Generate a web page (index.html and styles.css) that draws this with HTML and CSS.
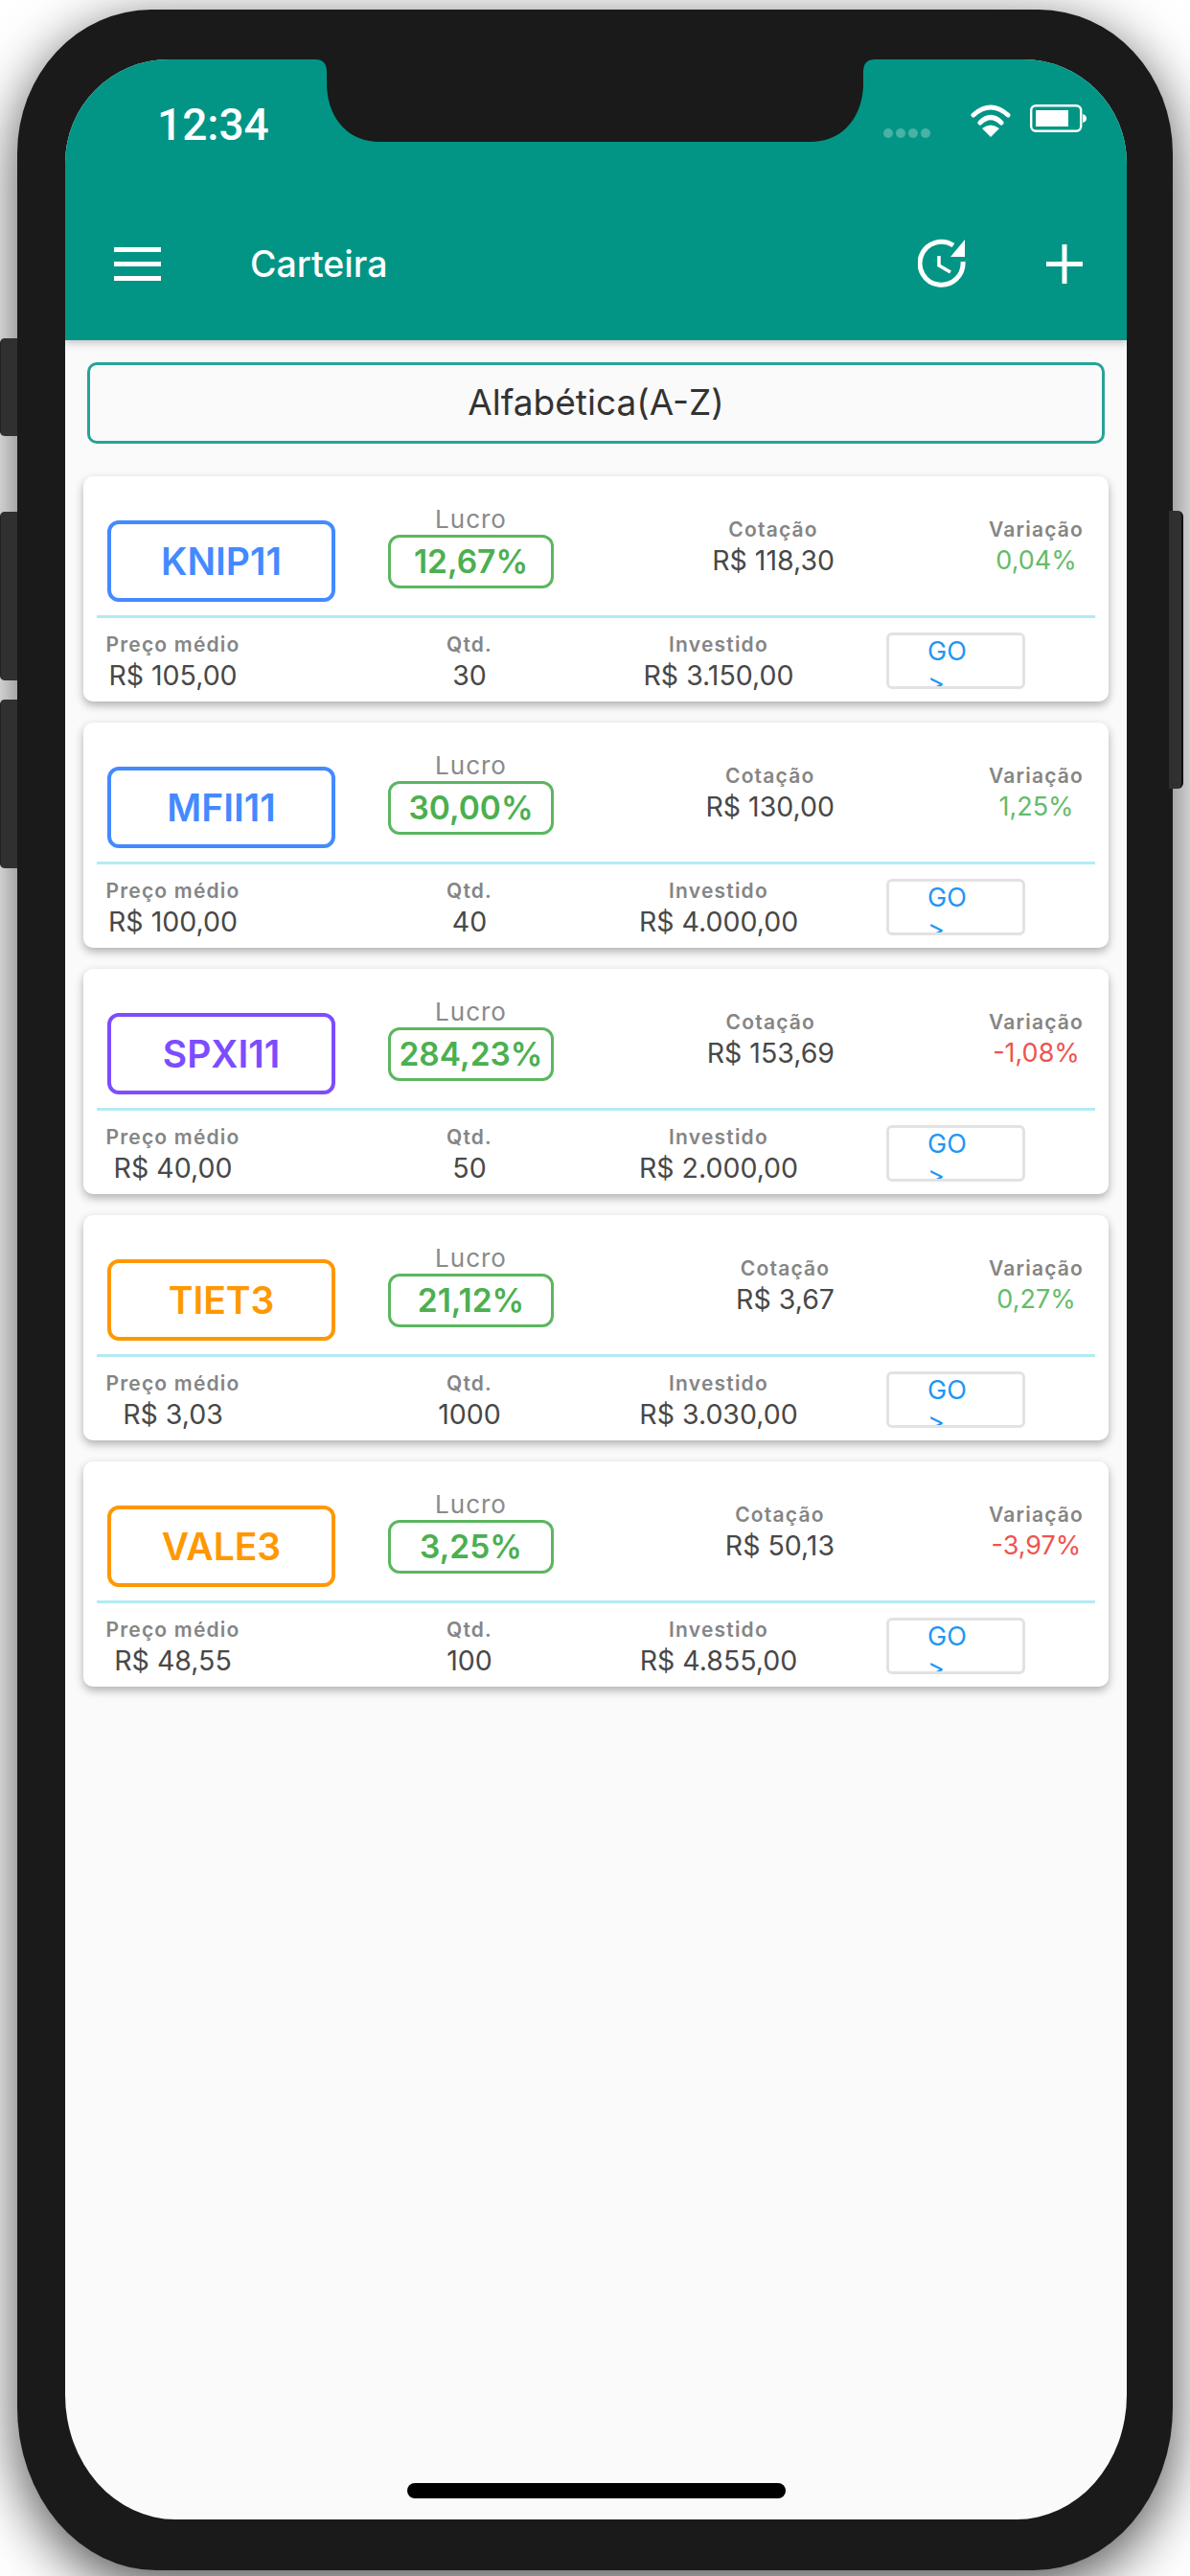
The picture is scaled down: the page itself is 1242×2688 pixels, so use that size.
FILE: index.html
```html
<!DOCTYPE html>
<html>
<head lang="pt">
    <meta charset="UTF-8">
    <title>Carteira</title>
    <link rel="stylesheet" href="styles.css">
</head>
<body>
<div class="phone">
    <span class="side-btn btn-mute"></span>
    <span class="side-btn btn-up"></span>
    <span class="side-btn btn-down"></span>
    <span class="side-btn btn-power"></span>

    <div class="screen">
        <svg class="notch" width="584" height="86" viewBox="0 0 584 86">
            <path d="M0 0Q12 0 12 13V28C14 66 38 86 67 86H517C546 86 570 66 572 28V13Q572 0 584 0Z" fill="#1a1a1a"/>
        </svg>

        <header class="header">
            <div class="status">
                <span class="time">12:34</span>
                <span class="dots"><i></i><i></i><i></i><i></i></span>
                <svg class="wifi" width="42" height="35" viewBox="0 0 42 35">
                    <path d="M3 12Q21 -4 39 12M10 20Q21 9 32 20" fill="none" stroke="#fff" stroke-width="5" stroke-linecap="round"/>
                    <path d="M21 35L12 26Q21 19 30 26Z" fill="#fff"/>
                </svg>
                <svg class="battery" width="59" height="29" viewBox="0 0 59 29">
                    <rect x="1.2" y="1.2" width="52" height="26.6" rx="5" fill="none" stroke="#fff" stroke-width="2.4"/>
                    <rect x="6" y="6" width="34" height="17" fill="#fff"/>
                    <path d="M55 10q4 1 4 4.500t-4 4.500z" fill="#fff"/>
                </svg>
            </div>
            <div class="toolbar">
                <span class="menu"><i></i><i></i><i></i></span>
                <span class="title">Carteira</span>
                <svg class="history" width="50" height="52" viewBox="0 0 50 52">
                    <path d="M37 7A22.500 22.500 0 1 0 47 24" fill="none" stroke="#fff" stroke-width="5"/>
                    <path d="M49 1V19H34Z" fill="#fff"/>
                    <path d="M22 18V28L34 35" fill="none" stroke="#fff" stroke-width="3.500"/>
                </svg>
                <svg class="plus" width="38" height="41" viewBox="0 0 38 41">
                    <path d="M19 0V41M0 20.500H38" stroke="#fff" stroke-width="5"/>
                </svg>
            </div>
        </header>

        <div class="sort">Alfabética(A-Z)</div>

        <div class="list">
            <div class="card">
                <div class="card-top">
                    <div class="ticker blue">KNIP11</div>
                    <div class="lucro"><span class="lucro-label">Lucro</span><span class="lucro-value">12,67%</span></div>
                    <div class="col cotacao"><span class="label">Cotação</span><span class="value">R$ 118,30</span></div>
                    <div class="col variacao"><span class="label">Variação</span><span class="value up">0,04%</span></div>
                </div>
                <div class="divider"></div>
                <div class="card-bottom">
                    <div class="col preco"><span class="label">Preço médio</span><span class="value">R$ 105,00</span></div>
                    <div class="col qtd"><span class="label">Qtd.</span><span class="value">30</span></div>
                    <div class="col investido"><span class="label">Investido</span><span class="value">R$ 3.150,00</span></div>
                    <div class="go">GO &gt;</div>
                </div>
            </div>

            <div class="card">
                <div class="card-top">
                    <div class="ticker blue">MFII11</div>
                    <div class="lucro"><span class="lucro-label">Lucro</span><span class="lucro-value">30,00%</span></div>
                    <div class="col cotacao"><span class="label">Cotação</span><span class="value">R$ 130,00</span></div>
                    <div class="col variacao"><span class="label">Variação</span><span class="value up">1,25%</span></div>
                </div>
                <div class="divider"></div>
                <div class="card-bottom">
                    <div class="col preco"><span class="label">Preço médio</span><span class="value">R$ 100,00</span></div>
                    <div class="col qtd"><span class="label">Qtd.</span><span class="value">40</span></div>
                    <div class="col investido"><span class="label">Investido</span><span class="value">R$ 4.000,00</span></div>
                    <div class="go">GO &gt;</div>
                </div>
            </div>

            <div class="card">
                <div class="card-top">
                    <div class="ticker purple">SPXI11</div>
                    <div class="lucro"><span class="lucro-label">Lucro</span><span class="lucro-value">284,23%</span></div>
                    <div class="col cotacao"><span class="label">Cotação</span><span class="value">R$ 153,69</span></div>
                    <div class="col variacao"><span class="label">Variação</span><span class="value down">-1,08%</span></div>
                </div>
                <div class="divider"></div>
                <div class="card-bottom">
                    <div class="col preco"><span class="label">Preço médio</span><span class="value">R$ 40,00</span></div>
                    <div class="col qtd"><span class="label">Qtd.</span><span class="value">50</span></div>
                    <div class="col investido"><span class="label">Investido</span><span class="value">R$ 2.000,00</span></div>
                    <div class="go">GO &gt;</div>
                </div>
            </div>

            <div class="card">
                <div class="card-top">
                    <div class="ticker orange">TIET3</div>
                    <div class="lucro"><span class="lucro-label">Lucro</span><span class="lucro-value">21,12%</span></div>
                    <div class="col cotacao"><span class="label">Cotação</span><span class="value">R$ 3,67</span></div>
                    <div class="col variacao"><span class="label">Variação</span><span class="value up">0,27%</span></div>
                </div>
                <div class="divider"></div>
                <div class="card-bottom">
                    <div class="col preco"><span class="label">Preço médio</span><span class="value">R$ 3,03</span></div>
                    <div class="col qtd"><span class="label">Qtd.</span><span class="value">1000</span></div>
                    <div class="col investido"><span class="label">Investido</span><span class="value">R$ 3.030,00</span></div>
                    <div class="go">GO &gt;</div>
                </div>
            </div>

            <div class="card">
                <div class="card-top">
                    <div class="ticker orange">VALE3</div>
                    <div class="lucro"><span class="lucro-label">Lucro</span><span class="lucro-value">3,25%</span></div>
                    <div class="col cotacao"><span class="label">Cotação</span><span class="value">R$ 50,13</span></div>
                    <div class="col variacao"><span class="label">Variação</span><span class="value down">-3,97%</span></div>
                </div>
                <div class="divider"></div>
                <div class="card-bottom">
                    <div class="col preco"><span class="label">Preço médio</span><span class="value">R$ 48,55</span></div>
                    <div class="col qtd"><span class="label">Qtd.</span><span class="value">100</span></div>
                    <div class="col investido"><span class="label">Investido</span><span class="value">R$ 4.855,00</span></div>
                    <div class="go">GO &gt;</div>
                </div>
            </div>
        </div>

        <div class="home-bar"></div>
    </div>
</div>
</body>
</html>
```

FILE: styles.css
```css
*{ box-sizing: border-box;}

html,body{
    margin: 0;
    padding: 0;
}
body{
    width: 1242px;
    height: 2688px;
    padding: 10px 0 0 18px;
    overflow: hidden;
    background-color: #ffffff;
    font-family: Inter, "Liberation Sans", sans-serif;
}

/* phone frame */
.phone{
    position: relative;
    width: 1206px;
    height: 2672px;
    padding: 52px 48px 53px 50px;
    background-color: #1a1a1a;
    border-radius: 140px 140px 145px 145px / 150px 150px 170px 170px;
    box-shadow: 0 16px 60px rgba(0,0,0,.7);
}
.side-btn{
    position: absolute;
    background-color: #303030;
}
.btn-mute,.btn-up,.btn-down{
    left: -18px;
    width: 18px;
    border-radius: 5px 0 0 5px;
    border-left: 1px solid #222;
}
.btn-mute{ top: 343px; height: 102px;}
.btn-up{ top: 524px; height: 176px;}
.btn-down{ top: 720px; height: 176px;}
.btn-power{
    top: 523px;
    right: -11px;
    width: 15px;
    height: 290px;
    border-radius: 0 6px 6px 0;
    border-right: 2px solid #111;
}

.screen{
    position: relative;
    display: flex;
    flex-direction: column;
    width: 1108px;
    height: 2567px;
    background-color: #fafafa;
    border-radius: 108px 108px 115px 115px / 108px 108px 130px 130px;
    overflow: hidden;
}
.notch{
    position: absolute;
    left: 261px;
    top: 0;
    z-index: 1;
}

/* header */
.header{
    flex: none;
    height: 293px;
    background-color: #029585;
    box-shadow: 0 3px 8px rgba(0,0,0,.22);
    position: relative;
    z-index: 0;
}
.status{
    display: flex;
    align-items: flex-start;
    height: 146px;
    padding: 46px 42px 0 96px;
    color: #fff;
}
.time{
    font-family: Roboto, sans-serif;
    font-size: 46px;
    font-weight: 500;
    line-height: 44px;
}
.dots{
    display: flex;
    gap: 3px;
    margin: 26px 42px 0 auto;
}
.dots i{
    width: 10px;
    height: 10px;
    border-radius: 5px;
    background-color: rgba(255,255,255,.28);
}
.battery{
    margin: 1px 0 0 20px;
}
.toolbar{
    display: flex;
    align-items: center;
    height: 134px;
    padding: 0 46px 0 51px;
    color: #fff;
}
.menu{
    display: flex;
    flex-direction: column;
    justify-content: space-between;
    width: 49px;
    height: 35px;
}
.menu i{
    height: 5px;
    background-color: #fff;
}
.title{
    margin-left: 93px;
    font-size: 37.500px;
    font-weight: 500;
}
.history{
    margin-left: auto;
}
.plus{
    margin-left: 84px;
}

/* sort */
.sort{
    flex: none;
    height: 85px;
    margin: 23px 23px 0;
    border: 3px solid #26a396;
    border-radius: 10px;
    font-size: 37px;
    line-height: 77px;
    text-align: center;
    color: #333;
    background-color: #fafafa;
}

/* cards */
.list{
    display: flex;
    flex-direction: column;
    gap: 22px;
    margin: 34px 19px 0;
}
.card{
    height: 235px;
    background-color: #fff;
    border-radius: 10px;
    box-shadow: 0 4px 10px rgba(0,0,0,.3);
}
.card-top{
    display: flex;
    align-items: flex-start;
    height: 145px;
    padding: 0 28px 0 25px;
}
.ticker{
    width: 238px;
    height: 85px;
    margin-top: 46px;
    border: 4px solid;
    border-radius: 12px;
    font-size: 39px;
    font-weight: 600;
    line-height: 77px;
    text-align: center;
}
.blue{ color: #448aff;}
.purple{ color: #7c4dff;}
.orange{ color: #ff9800;}

.lucro{
    display: flex;
    flex-direction: column;
    align-items: center;
    width: 173px;
    margin: 32px 0 0 55px;
}
.lucro-label{
    font-size: 26px;
    line-height: 26px;
    letter-spacing: 1px;
    color: #8a8a8a;
}
.lucro-value{
    width: 173px;
    height: 56px;
    margin-top: 3px;
    border: 3px solid #5cb660;
    border-radius: 12px;
    font-size: 33.500px;
    font-weight: 600;
    line-height: 50px;
    text-align: center;
    color: #4caf50;
}

.col{
    display: flex;
    flex-direction: column;
    align-items: center;
}
.label{
    font-size: 21px;
    font-weight: 600;
    line-height: 26px;
    letter-spacing: 1.200px;
    color: #858585;
    white-space: nowrap;
}
.value{
    font-size: 28.500px;
    line-height: 38px;
    color: #484848;
    white-space: nowrap;
}
.value.up{ color: #66bb6a; font-size: 27px;}
.value.down{ color: #ef5350; font-size: 27px;}

.cotacao{
    margin: 43px 0 0 auto;
}
.variacao{
    width: 95px;
    margin: 43px 0 0 163px;
}

.divider{
    height: 3px;
    margin: 0 14px;
    background-color: #b2ebf2;
}

.card-bottom{
    display: flex;
    align-items: flex-start;
    padding: 15px 0 0 25px;
}
.preco{ width: 137px;}
.qtd{
    width: 100px;
    margin-left: 191px;
}
.investido{
    width: 180px;
    margin-left: 120px;
}
.go{
    width: 145px;
    height: 59px;
    margin-left: 85px;
    padding: 0 60px 0 40px;
    border: 3px solid #e2e2e2;
    border-radius: 6px;
    font-size: 27px;
    line-height: 33px;
    color: #2196f3;
    overflow: hidden;
}

.home-bar{
    flex: none;
    width: 395px;
    height: 16px;
    margin: auto 0 22px 357px;
    background-color: #000;
    border-radius: 8px;
}
```
